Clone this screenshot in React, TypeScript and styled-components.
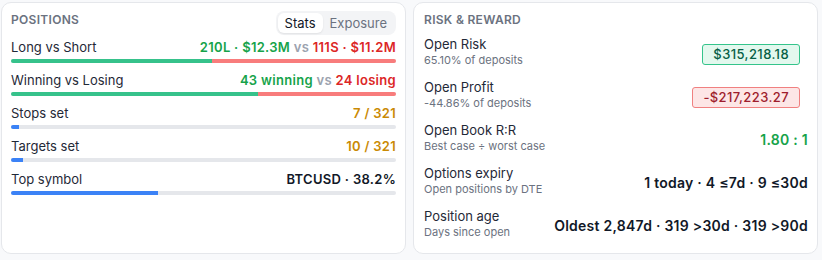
import * as React from 'react';

// Libs
import styled, { createGlobalStyle } from 'styled-components';

const GlobalStyle = createGlobalStyle`
  html, body {
    margin: 0;
    padding: 0;
    background: #f8f9fb;
  }

  body {
    font-family: Inter, "Noto Sans", "Liberation Sans", sans-serif;
    color: #1f2937;
    -webkit-font-smoothing: antialiased;
  }
`;

const Page = styled.div`
  display: grid;
  grid-template-columns: 1fr 1fr;
  gap: 7px;
  padding: 2px 4px 0 1px;
  height: 252px;
`;

const Card = styled.section<{ $right?: boolean }>`
  background: #ffffff;
  border: 1px solid #e5e7eb;
  border-radius: 10px;
  padding: ${({ $right }) => ($right ? '9px 9px 0 10px' : '8px 9px 0 9px')};
  display: flex;
  flex-direction: column;
  box-sizing: border-box;
`;

const Header = styled.div`
  display: flex;
  justify-content: space-between;
  align-items: flex-start;
  margin-bottom: 4px;
`;

const CardTitle = styled.h2<{ $offset?: boolean }>`
  margin: ${({ $offset }) => ($offset ? '1px 0 0' : '0')};
  font-size: 12px;
  line-height: 16px;
  font-weight: 600;
  letter-spacing: 0.3px;
  text-transform: uppercase;
  color: #6b7280;
`;

const Tabs = styled.div`
  display: flex;
  padding: 2px;
  border-radius: 8px;
  background: #f3f4f6;
`;

const Tab = styled.button<{ $active?: boolean }>`
  border: none;
  margin: 0;
  font-family: inherit;
  font-size: 13px;
  line-height: 20px;
  padding: 0 7px;
  border-radius: 6px;
  cursor: pointer;
  color: ${({ $active }) => ($active ? '#111827' : '#6b7280')};
  background: ${({ $active }) => ($active ? '#ffffff' : 'transparent')};
  box-shadow: ${({ $active }) => ($active ? '0 1px 2px rgba(0,0,0,0.08)' : 'none')};
`;

const StatRow = styled.div`
  display: flex;
  flex-direction: column;
  gap: 4px;
  margin-bottom: 9px;
`;

const StatLine = styled.div`
  display: flex;
  justify-content: space-between;
  align-items: center;
  font-size: 13px;
  line-height: 16px;
`;

const Label = styled.span`
  color: #1f2937;
`;

const Value = styled.span<{ $tone?: 'green' | 'red' | 'muted' | 'amber' | 'dark' }>`
  font-weight: 600;
  letter-spacing: 0.3px;
  color: ${({ $tone }) =>
    $tone === 'green'
      ? '#16a34a'
      : $tone === 'red'
        ? '#dc2626'
        : $tone === 'muted'
          ? '#9ca3af'
          : $tone === 'amber'
            ? '#ca8a04'
            : '#111827'};
`;

const Track = styled.div`
  display: flex;
  height: 4px;
  border-radius: 3px;
  background: #e5e7eb;
  overflow: hidden;
`;

const Fill = styled.div<{ $color: string }>`
  height: 100%;
  background: ${({ $color }) => $color};
`;

const RiskRow = styled.div`
  display: flex;
  justify-content: space-between;
  align-items: center;
  height: 32px;
  margin-top: 8px;

  & + & {
    margin-top: 11px;
  }
`;

const RiskText = styled.div`
  display: flex;
  flex-direction: column;
`;

const RiskLabel = styled.span`
  font-size: 13px;
  line-height: 17px;
  color: #1f2937;
`;

const RiskSub = styled.span`
  font-size: 11px;
  line-height: 15px;
  color: #6b7280;
`;

const Badge = styled.span<{ $tone: 'green' | 'red' }>`
  margin: 4px 8px 0 0;
  padding: 0 10px;
  font-size: 13px;
  line-height: 19px;
  font-weight: 500;
  letter-spacing: 0.4px;
  border-radius: 3px;
  border: 1px solid ${({ $tone }) => ($tone === 'green' ? '#34c48b' : '#f08080')};
  background: ${({ $tone }) => ($tone === 'green' ? '#e3f8ee' : '#fde6e6')};
  color: ${({ $tone }) => ($tone === 'green' ? '#065f46' : '#9f1d2d')};
`;

const BigValue = styled.span<{ $green?: boolean }>`
  font-size: 14px;
  font-weight: 600;
  letter-spacing: 0.25px;
  margin-top: 3px;
  color: ${({ $green }) => ($green ? '#16a34a' : '#111827')};
`;

type Stat = {
  label: string;
  value: React.ReactNode;
  fills: { pct: number; color: string }[];
};

const GREEN = '#36c28b';
const RED = '#f87c7c';
const BLUE = '#3b82f6';

const stats: Stat[] = [
  {
    label: 'Long vs Short',
    value: (
      <>
        <Value $tone="green">210L · $12.3M</Value> <Value $tone="muted">vs</Value>{' '}
        <Value $tone="red">111S · $11.2M</Value>
      </>
    ),
    fills: [
      { pct: 52.3, color: GREEN },
      { pct: 47.7, color: RED },
    ],
  },
  {
    label: 'Winning vs Losing',
    value: (
      <>
        <Value $tone="green">43 winning</Value> <Value $tone="muted">vs</Value>{' '}
        <Value $tone="red">24 losing</Value>
      </>
    ),
    fills: [
      { pct: 64.2, color: GREEN },
      { pct: 35.8, color: RED },
    ],
  },
  {
    label: 'Stops set',
    value: <Value $tone="amber">7 / 321</Value>,
    fills: [{ pct: 2.2, color: BLUE }],
  },
  {
    label: 'Targets set',
    value: <Value $tone="amber">10 / 321</Value>,
    fills: [{ pct: 3.1, color: BLUE }],
  },
  {
    label: 'Top symbol',
    value: <Value $tone="dark">BTCUSD · 38.2%</Value>,
    fills: [{ pct: 38.2, color: BLUE }],
  },
];

const App: React.FC = (): JSX.Element => (
  <>
    <GlobalStyle />
    <Page>
      <Card>
        <Header>
          <CardTitle $offset>Positions</CardTitle>
          <Tabs>
            <Tab $active>Stats</Tab>
            <Tab>Exposure</Tab>
          </Tabs>
        </Header>

        {stats.map((stat) => (
          <StatRow key={stat.label}>
            <StatLine>
              <Label>{stat.label}</Label>
              <span>{stat.value}</span>
            </StatLine>
            <Track>
              {stat.fills.map((fill, i) => (
                <Fill key={i} $color={fill.color} style={{ width: `${fill.pct}%` }} />
              ))}
            </Track>
          </StatRow>
        ))}
      </Card>

      <Card $right>
        <CardTitle>Risk &amp; Reward</CardTitle>

        <RiskRow>
          <RiskText>
            <RiskLabel>Open Risk</RiskLabel>
            <RiskSub>65.10% of deposits</RiskSub>
          </RiskText>
          <Badge $tone="green">$315,218.18</Badge>
        </RiskRow>

        <RiskRow>
          <RiskText>
            <RiskLabel>Open Profit</RiskLabel>
            <RiskSub>-44.86% of deposits</RiskSub>
          </RiskText>
          <Badge $tone="red">-$217,223.27</Badge>
        </RiskRow>

        <RiskRow>
          <RiskText>
            <RiskLabel>Open Book R:R</RiskLabel>
            <RiskSub>Best case ÷ worst case</RiskSub>
          </RiskText>
          <BigValue $green>1.80 : 1</BigValue>
        </RiskRow>

        <RiskRow>
          <RiskText>
            <RiskLabel>Options expiry</RiskLabel>
            <RiskSub>Open positions by DTE</RiskSub>
          </RiskText>
          <BigValue>1 today · 4 ≤7d · 9 ≤30d</BigValue>
        </RiskRow>

        <RiskRow>
          <RiskText>
            <RiskLabel>Position age</RiskLabel>
            <RiskSub>Days since open</RiskSub>
          </RiskText>
          <BigValue>Oldest 2,847d · 319 &gt;30d · 319 &gt;90d</BigValue>
        </RiskRow>
      </Card>
    </Page>
  </>
);

export default App;
